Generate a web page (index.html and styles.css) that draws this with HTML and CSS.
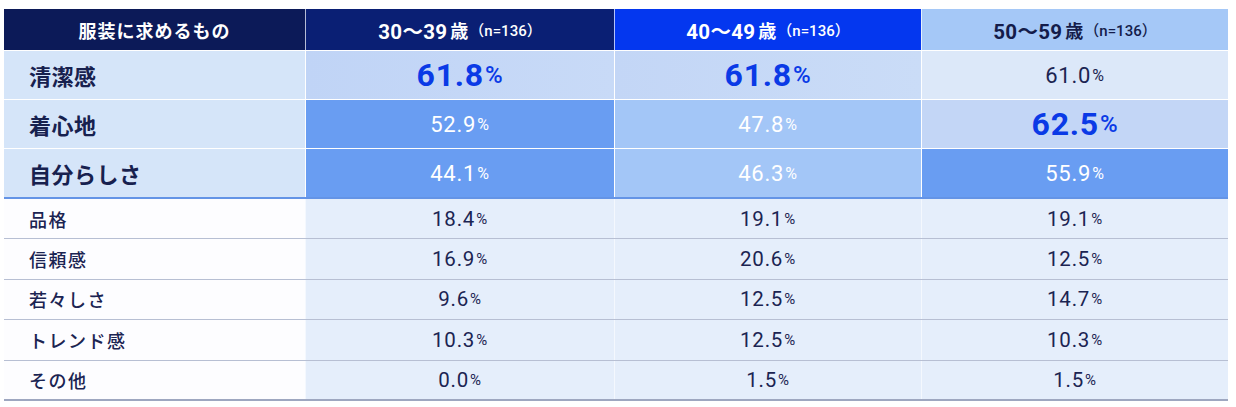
FILE: index.html
```html
<!DOCTYPE html>
<html lang="ja">
<head>
<meta charset="utf-8">
<link rel="stylesheet" href="styles.css">
</head>
<body>
<div class="table">
  <div class="row head">
    <div class="cell h1">服装に求めるもの</div>
    <div class="cell h2"><span class="age">30〜39</span><span class="sai">歳</span><span class="n">（n=136）</span></div>
    <div class="cell h3"><span class="age">40〜49</span><span class="sai">歳</span><span class="n">（n=136）</span></div>
    <div class="cell h4"><span class="age">50〜59</span><span class="sai">歳</span><span class="n">（n=136）</span></div>
  </div>

  <div class="row big">
    <div class="cell label">清潔感</div>
    <div class="cell v c-a hl">61.8<span class="pct">%</span></div>
    <div class="cell v c-b hl">61.8<span class="pct">%</span></div>
    <div class="cell v c-c">61.0<span class="pct">%</span></div>
  </div>
  <div class="row big">
    <div class="cell label">着心地</div>
    <div class="cell v c-d wt">52.9<span class="pct">%</span></div>
    <div class="cell v c-e wt">47.8<span class="pct">%</span></div>
    <div class="cell v c-f hl">62.5<span class="pct">%</span></div>
  </div>
  <div class="row big last">
    <div class="cell label">自分らしさ</div>
    <div class="cell v c-d wt">44.1<span class="pct">%</span></div>
    <div class="cell v c-e wt">46.3<span class="pct">%</span></div>
    <div class="cell v c-d wt">55.9<span class="pct">%</span></div>
  </div>

  <div class="row small">
    <div class="cell slabel">品格</div>
    <div class="cell sv">18.4<span class="pct">%</span></div>
    <div class="cell sv">19.1<span class="pct">%</span></div>
    <div class="cell sv">19.1<span class="pct">%</span></div>
  </div>
  <div class="row small">
    <div class="cell slabel">信頼感</div>
    <div class="cell sv">16.9<span class="pct">%</span></div>
    <div class="cell sv">20.6<span class="pct">%</span></div>
    <div class="cell sv">12.5<span class="pct">%</span></div>
  </div>
  <div class="row small">
    <div class="cell slabel">若々しさ</div>
    <div class="cell sv">9.6<span class="pct">%</span></div>
    <div class="cell sv">12.5<span class="pct">%</span></div>
    <div class="cell sv">14.7<span class="pct">%</span></div>
  </div>
  <div class="row small">
    <div class="cell slabel">トレンド感</div>
    <div class="cell sv">10.3<span class="pct">%</span></div>
    <div class="cell sv">12.5<span class="pct">%</span></div>
    <div class="cell sv">10.3<span class="pct">%</span></div>
  </div>
  <div class="row small lastrow">
    <div class="cell slabel">その他</div>
    <div class="cell sv">0.0<span class="pct">%</span></div>
    <div class="cell sv">1.5<span class="pct">%</span></div>
    <div class="cell sv">1.5<span class="pct">%</span></div>
  </div>
</div>
</body>
</html>
```

FILE: styles.css
```css
* { box-sizing: border-box; }
html, body { margin: 0; padding: 0; background: #ffffff; }
body {
  font-family: Roboto, "Noto Sans CJK JP", sans-serif;
  color: #1b2452;
  padding: 9px 8px 0 4px;
}
.table {
  width: 1224px;
  display: flex;
  flex-direction: column;
}
.row {
  display: grid;
  grid-template-columns: 301px 309px 307px 307px;
}
.cell {
  display: flex;
  align-items: center;
  justify-content: center;
  border-left: 1px solid #ffffff;
  white-space: nowrap;
}
.cell:first-child { border-left: none; }

/* header */
.head { height: 41px; }
.head .cell { border-left-color: rgba(255,255,255,0.7); }
.h1 {
  background: #0c1a58;
  color: #ffffff;
  font-family: "Noto Sans CJK JP", sans-serif;
  font-weight: 700;
  font-size: 18px;
  letter-spacing: 1px;
}
.h2 { background: #0a1f74; color: #ffffff; }
.h3 { background: #0437ef; color: #ffffff; }
.h4 { background: #a5c8f7; color: #141c4a; }
.age {
  font-family: Roboto, "Noto Sans CJK JP", sans-serif;
  font-weight: 700;
  font-size: 20.5px;
  letter-spacing: 0.3px;
}
.sai {
  font-family: "Noto Sans CJK JP", sans-serif;
  font-weight: 700;
  font-size: 18px;
  margin-left: 3px;
}
.n {
  font-family: Roboto, "Noto Sans CJK JP", sans-serif;
  font-weight: 500;
  font-size: 15px;
  margin-left: 1px;
}

/* big rows */
.big {
  height: 49px;
  border-top: 1px solid #ffffff;
}
.big.last {
  height: 51px;
  border-bottom: 2px solid #6494e6;
}
.label {
  justify-content: flex-start;
  padding-left: 25px;
  background: #d5e5f9;
  font-family: "Noto Sans CJK JP", sans-serif;
  font-weight: 700;
  font-size: 22px;
  letter-spacing: 0.5px;
  color: #17214f;
}
.v {
  font-size: 22px;
  font-weight: 400;
  letter-spacing: 0.8px;
  color: #1b2452;
}
.v .pct { font-size: 16px; margin-left: 1px; }
.hl {
  color: #0a3ae6;
  font-weight: 700;
  font-size: 32px;
  letter-spacing: 0.8px;
}
.hl .pct { font-size: 24px; font-weight: 500; margin-left: 1px; }
.wt { color: #ffffff; }
.c-a { background: linear-gradient(90deg, #c0d4f6, #c8daf7); }
.c-b { background: linear-gradient(90deg, #c3d6f6, #cadcf7); }
.c-c { background: #dce8f9; }
.c-d { background: #699df2; }
.c-e { background: #a3c6f7; }
.c-f { background: #c3d6f6; }

/* small rows */
.small {
  height: 40.4px;
  border-bottom: 1px solid #b7bfd3;
}
.small.lastrow {
  border-bottom: 2px solid #9ea7c0;
}
.slabel {
  justify-content: flex-start;
  padding-left: 25px;
  background: #fdfdff;
  font-family: "Noto Sans CJK JP", sans-serif;
  font-weight: 500;
  font-size: 18px;
  letter-spacing: 1.5px;
  color: #1b2452;
}
.sv {
  background: #e5eefb;
  font-size: 20.5px;
  font-weight: 400;
  letter-spacing: 0.8px;
  color: #1b2452;
  border-left-color: #f4f8fe;
}
.sv .pct { font-size: 15px; margin-left: 1px; }
```
